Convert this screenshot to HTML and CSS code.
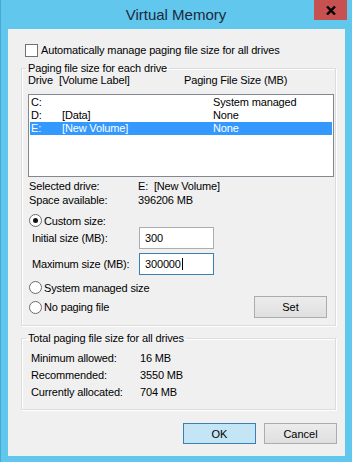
FILE: index.html
```html
<!DOCTYPE html>
<html lang="en">
<head>
<meta charset="utf-8">
<title>Virtual Memory</title>
<link rel="stylesheet" href="styles.css">
</head>
<body>
<div class="window">
  <div class="titlebar">
    <span class="title">Virtual Memory</span>
    <button class="close" aria-label="Close">
      <svg width="10" height="9" viewBox="0 0 10 9"><path d="M1 0.5 L9 8.5 M9 0.5 L1 8.5" stroke="#000" stroke-width="2.4"/></svg>
    </button>
  </div>
  <div class="client">
    <label class="check-row"><span class="checkbox"></span>Automatically manage paging file size for all drives</label>

    <fieldset class="group group-drives">
      <legend>Paging file size for each drive</legend>
      <div class="list-head"><span>Drive</span><span>[Volume Label]</span><span>Paging File Size (MB)</span></div>
      <div class="listbox">
        <div class="list-row"><span>C:</span><span></span><span>System managed</span></div>
        <div class="list-row"><span>D:</span><span>[Data]</span><span>None</span></div>
        <div class="list-row selected"><span>E:</span><span>[New Volume]</span><span>None</span></div>
      </div>
      <div class="info-row first"><span class="key">Selected drive:</span><span>E:&nbsp; [New Volume]</span></div>
      <div class="info-row"><span class="key">Space available:</span><span>396206 MB</span></div>

      <div class="radio-row custom"><span class="radio checked"></span>Custom size:</div>
      <div class="field-row"><span class="field-label">Initial size (MB):</span><div class="textbox">300</div></div>
      <div class="field-row second"><span class="field-label">Maximum size (MB):</span><div class="textbox focused">300000<span class="caret"></span></div></div>

      <div class="radio-row managed"><span class="radio"></span>System managed size</div>
      <div class="set-row">
        <div class="radio-row"><span class="radio"></span>No paging file</div>
        <button class="btn set">Set</button>
      </div>
    </fieldset>

    <fieldset class="group group-total">
      <legend>Total paging file size for all drives</legend>
      <div class="total-row first"><span class="key">Minimum allowed:</span><span>16 MB</span></div>
      <div class="total-row"><span class="key">Recommended:</span><span>3550 MB</span></div>
      <div class="total-row"><span class="key">Currently allocated:</span><span>704 MB</span></div>
    </fieldset>

    <div class="actions">
      <button class="btn default">OK</button>
      <button class="btn">Cancel</button>
    </div>
  </div>
</div>
</body>
</html>
```

FILE: styles.css
```css
*{box-sizing:border-box;}
html,body{margin:0;padding:0;}
body{
  font-family:'Liberation Sans',Arial,sans-serif;
  font-size:11px;
  color:#000;
  background:#62c7ec;
}

.window{ width:352px; height:462px; display:flex; flex-direction:column; background:#62c7ec; border-left:1px solid #4aa8d2; }

.titlebar{ position:relative; height:29px; display:flex; justify-content:center; align-items:center; }
.title{ font-size:15px; line-height:28px; color:#1b2a3e; margin-left:-1px; }
.close{ position:absolute; top:0; right:5px; width:33px; height:20px; border:0; padding:0; background:#c75050; display:flex; align-items:center; justify-content:center; }

.client{ flex:1; margin:0 7px 6px 7px; background:#f0f0f0; padding-top:15px; letter-spacing:-0.15px; }

.check-row{ display:flex; align-items:center; height:13px; padding-left:17px; line-height:13px; }
.checkbox{ width:13px; height:13px; border:1px solid #707070; background:#fff; margin-right:3px; }

.group{ border:1px solid #dcdcdc; box-shadow:inset 1px 1px 0 #fff, 1px 1px 0 #fff; margin:5px 9px 0 13px; padding:0 1px 7px 6px; min-inline-size:0; }
.group legend{ padding:0 2px; margin-left:-2px; line-height:12px; }

.list-head{ display:grid; grid-template-columns:31px 125px 1fr; line-height:12px; }

.listbox{ margin-top:8px; height:83px; border:1px solid #828790; background:#fff; padding:1px; }
.list-row{ display:grid; grid-template-columns:31px 151px 1fr; line-height:13px; padding-left:1px; }
.list-row.selected{ background:#3399ff; color:#fff; }

.info-row{ display:flex; line-height:14px; padding-left:1px; }
.info-row.first{ margin-top:2px; }
.info-row .key{ width:109px; }

.radio-row{ display:flex; align-items:center; height:13px; padding-left:1px; }
.radio-row.custom{ margin-top:7px; }
.radio-row.managed{ margin-top:6px; }
.radio{ position:relative; width:13px; height:13px; border:1px solid #6a6a6a; border-radius:50%; background:#fff; margin-right:2px; }
.radio.checked::after{ content:""; position:absolute; left:3px; top:3px; width:5px; height:5px; border-radius:50%; background:#111; }

.field-row{ display:flex; align-items:center; height:22px; padding-left:4px; }
.field-row.second{ margin-top:4px; }
.field-label{ width:107px; }
.textbox{ width:75px; height:22px; border:1px solid #abadb3; background:#fff; padding-left:5px; line-height:20px; display:flex; align-items:center; }
.textbox.focused{ border-color:#3c7fb1; }
.caret{ display:inline-block; width:1px; height:12px; background:#000; margin-left:1px; }

.set-row{ display:flex; justify-content:space-between; align-items:center; height:22px; margin-top:2px; }

.btn{ font-family:inherit; font-size:11px; color:#000; width:73px; height:21px; border:1px solid #acacac; background:linear-gradient(#ececec,#dfdfdf); padding:0; }
.btn.set{ height:22px; margin-right:7px; }
.btn.default{ border-color:#3c7fb1; background:#c4e5f6; }

.group-total{ margin-top:6px; padding-bottom:8px; }
.total-row{ display:flex; line-height:17px; padding-left:3px; }
.total-row.first{ margin-top:6px; }
.total-row .key{ width:109px; }

.actions{ display:flex; justify-content:flex-end; gap:8px; margin-top:13px; padding-right:8px; }
```
